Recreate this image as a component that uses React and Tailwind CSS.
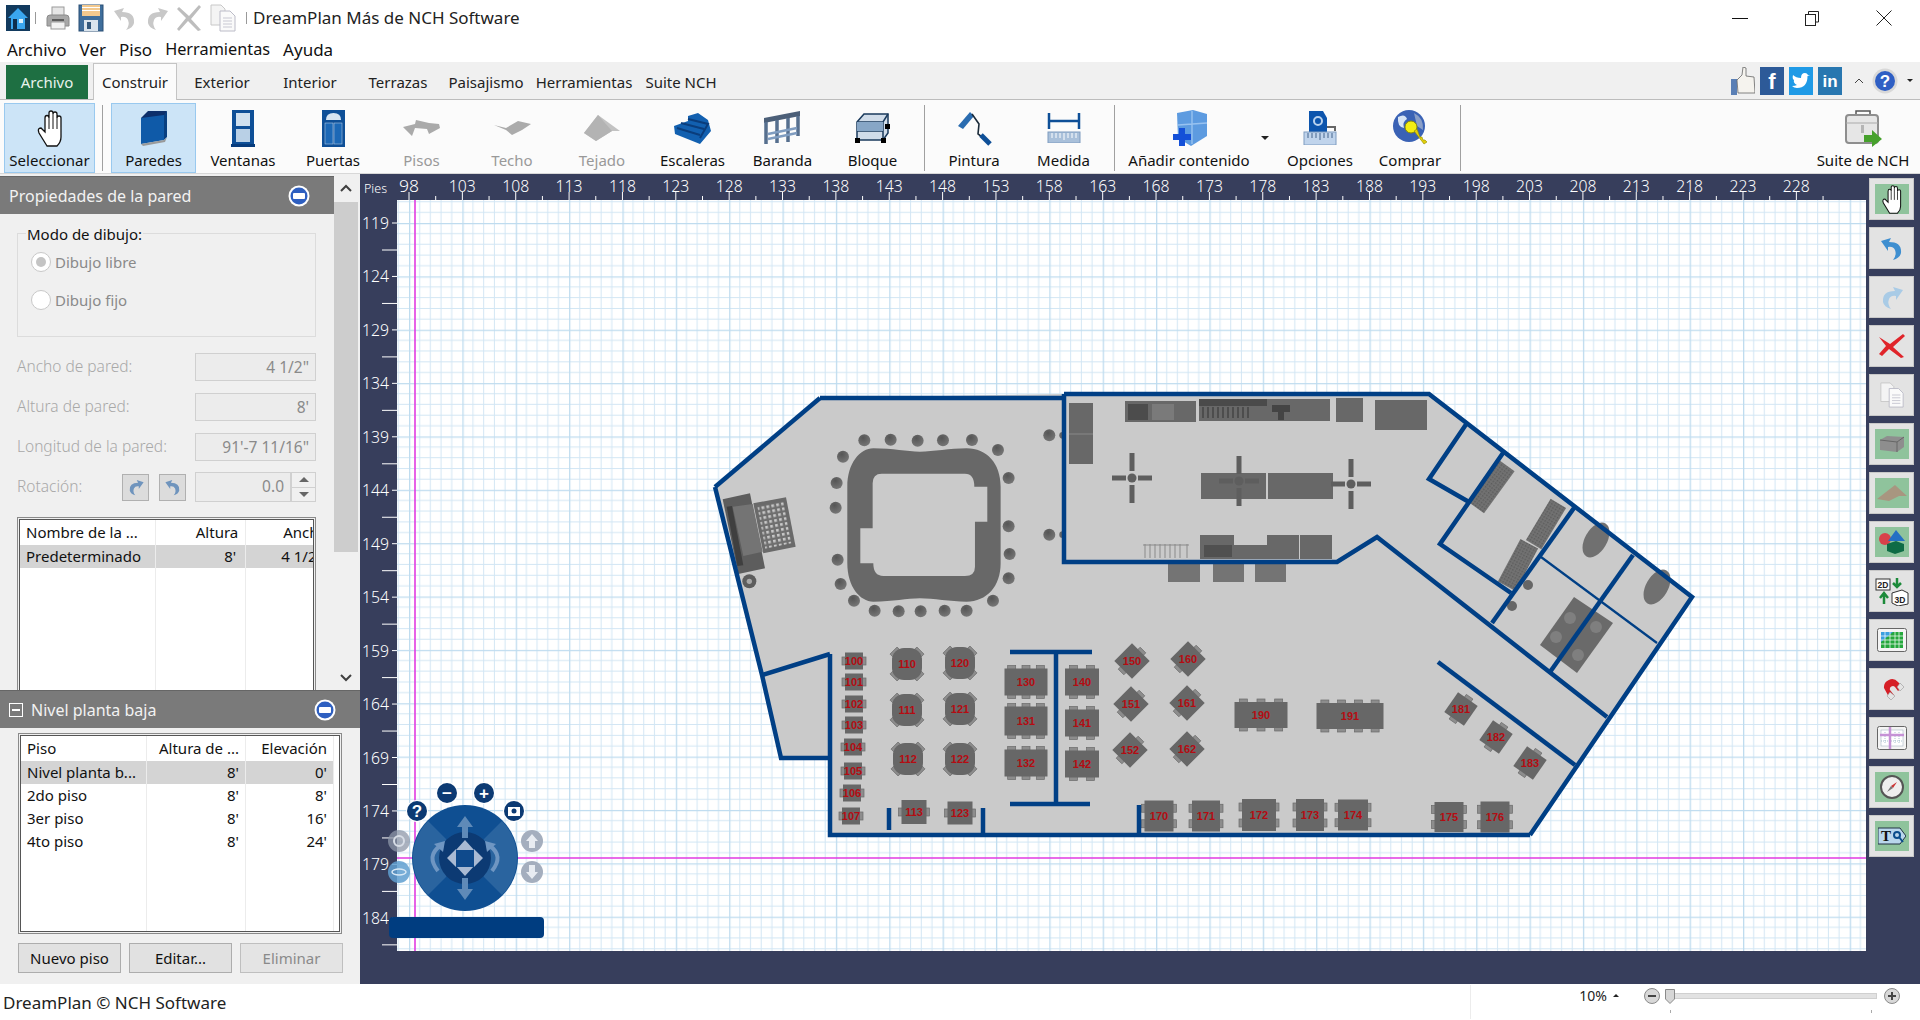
const FONT = "font-['Noto_Sans','Open_Sans',sans-serif]"

const TABS = [
  { label: 'Exterior', w: 'w-[90px]' },
  { label: 'Interior', w: 'w-[86px]' },
  { label: 'Terrazas', w: 'w-[90px]' },
  { label: 'Paisajismo', w: 'w-[86px]' },
  { label: 'Herramientas', w: 'w-[110px]' },
  { label: 'Suite NCH', w: 'w-[84px]' },
]

// ---------- small drawn icons ----------

function HandIcon({ width = 28, height = 37 }) {
  return (
    <svg width={width} height={height} viewBox="0 0 26 37">
      <path
        d="M10 36 L2 23 Q0 18 4 18 L8 22 V8 Q8 5.5 10 5.5 Q12 5.5 12 8 V3 Q12 1 14 1 Q16 1 16 3 V4 Q16 2 18 2 Q20 2 20 4 V8 Q20 6 22 6 Q24 6 24 8 V27 Q24 32 20 36 Z"
        fill="#fff"
        stroke="#111"
        strokeWidth="1.3"
      />
      <path d="M12 8 V19 M16 4 V19 M20 8 V19" fill="none" stroke="#111" strokeWidth="1" />
    </svg>
  )
}

function AppIcon() {
  return (
    <svg width="24" height="26" viewBox="0 0 24 26">
      <rect width="24" height="26" fill="#123a5e" />
      <path d="M12 3 L22 13 L19 13 L19 24 L5 24 L5 13 L2 13 Z" fill="#3aa6f0" />
      <rect x="7" y="14" width="4" height="10" fill="#0d2d4d" />
      <rect x="13" y="14" width="4" height="4" fill="#d7efff" />
    </svg>
  )
}

function PrinterIcon() {
  return (
    <svg width="26" height="26" viewBox="0 0 26 26">
      <rect x="7" y="2" width="12" height="10" fill="#e6e6e6" stroke="#9a9a9a" />
      <path d="M2 13 Q2 10 5 10 L21 10 Q24 10 24 13 L24 21 L2 21 Z" fill="#a8a8a8" stroke="#8a8a8a" />
      <rect x="6" y="17" width="14" height="7" fill="#f2f2f2" stroke="#999" />
      <rect x="7" y="14" width="12" height="2" fill="#5c5c5c" />
    </svg>
  )
}

function SaveIcon() {
  return (
    <svg width="26" height="28" viewBox="0 0 26 28">
      <rect x="1" y="1" width="24" height="26" fill="#3f6e9c" stroke="#2a4f75" />
      <rect x="4" y="1" width="18" height="11" fill="#f3c98e" />
      <rect x="4" y="3" width="18" height="1" fill="#fff" />
      <rect x="4" y="6" width="18" height="1" fill="#fff" />
      <rect x="6" y="16" width="14" height="11" fill="#dbe5ee" />
      <rect x="9" y="18" width="4" height="7" fill="#34597d" />
    </svg>
  )
}

function UndoIcon({ flip, color = '#c8c8c8', size = 26 }) {
  return (
    <svg width={size} height={size} viewBox="0 0 26 26" className={flip ? '-scale-x-100' : ''}>
      <path d="M2 6 L12 3 L10 7 Q23 7 22 18 Q21 23 14 25 Q18 20 16 15 Q14 11 9 12 L9 16 Z" fill={color} />
    </svg>
  )
}

function CrossIcon() {
  return (
    <svg width="26" height="28" viewBox="0 0 26 28">
      <path d="M3 3 L13 12 L23 1 L25 3 L15 15 L25 26 L22 27 L12 17 L3 27 L1 25 L10 14 L1 5 Z" fill="#bdbdbd" />
    </svg>
  )
}

function CopyIcon({ size = 28 }) {
  return (
    <svg width={size} height={size} viewBox="0 0 28 28">
      <path d="M2 1 L12 1 L16 5 L16 21 L2 21 Z" fill="#f4f4f4" stroke="#c8c8c8" />
      <path d="M11 7 L21 7 L26 12 L26 27 L11 27 Z" fill="#fafafa" stroke="#bcbcc8" />
      <path d="M14 14 H23 M14 17 H23 M14 20 H23 M14 23 H23" stroke="#c8c8d2" />
    </svg>
  )
}

function WallIcon() {
  return (
    <svg width="27" height="36" viewBox="0 0 27 36">
      <path d="M1 8 L8 1 L27 1 L24 8 Z" fill="#0c2f6b" />
      <path d="M1 8 L24 5 L24 30 L1 34 Z" fill="#0f5aa8" />
      <path d="M24 5 L27 1 L27 27 L24 30 Z" fill="#083f80" />
      <path d="M1 34 L24 30 L27 27 L25 32 L3 36 Z" fill="#9a9a9a" />
    </svg>
  )
}

function WindowIcon() {
  return (
    <svg width="24" height="37" viewBox="0 0 24 37">
      <rect x="1" y="0" width="22" height="35" fill="#0e4f97" />
      <rect x="5" y="3" width="14" height="13" fill="#cfe0ef" />
      <rect x="5" y="19" width="14" height="13" fill="#b9d0e6" />
      <rect x="0" y="34" width="24" height="3" fill="#063b7c" />
    </svg>
  )
}

function DoorIcon() {
  return (
    <svg width="23" height="37" viewBox="0 0 23 37">
      <rect width="23" height="37" fill="#0e4f97" />
      <path d="M4 10 Q4 3 11.5 3 Q19 3 19 10 Z" fill="#d6e4f1" />
      <rect x="3" y="13" width="8" height="21" fill="#1c68b6" stroke="#c5d8ea" strokeWidth="0.5" />
      <rect x="12" y="13" width="8" height="21" fill="#1c68b6" stroke="#c5d8ea" strokeWidth="0.5" />
    </svg>
  )
}

function FloorIcon() {
  return (
    <svg width="37" height="16" viewBox="0 0 37 16">
      <path d="M0 7 L12 4 L13 0 L26 3 L36 4 L37 8 L26 14 L24 9 L12 8 L9 16 Z" fill="#aaaaaa" />
    </svg>
  )
}

function CeilingIcon() {
  return (
    <svg width="37" height="14" viewBox="0 0 37 14">
      <path d="M0 4 L12 7 L24 0 L37 3 L28 9 L18 14 L12 9 Z" fill="#ababab" />
    </svg>
  )
}

function RoofIcon() {
  return (
    <svg width="36" height="26" viewBox="0 0 36 26">
      <path d="M14 0 L36 16 L28 16 L12 26 L0 18 Z" fill="#c2c2c2" />
      <path d="M14 0 L28 16 L12 26 L0 18 Z" fill="#b3b3b3" />
    </svg>
  )
}

function StairsIcon() {
  return (
    <svg width="37" height="31" viewBox="0 0 37 31">
      <path d="M0 13 L14 8 L14 3 L24 0 L34 7 L37 18 L26 31 L1 21 Z" fill="#1260b0" />
      <path d="M3 15 L26 22 M7 10 L30 16 M14 6 L34 11 L26 25" stroke="#0a3d7c" strokeWidth="2" fill="none" />
    </svg>
  )
}

function RailingIcon() {
  return (
    <svg width="37" height="36" viewBox="0 0 37 36">
      <path d="M0 8 L36 1 L36 6 L0 13 Z" fill="#4c5f78" />
      <path d="M2 12 V34 M13 10 V33 M24 8 V32 M34 6 V26" stroke="#566f8e" strokeWidth="3.5" />
      <path d="M4 24 L33 18 M4 29 L33 23" stroke="#7f9cc0" strokeWidth="2.5" />
    </svg>
  )
}

function BlockIcon() {
  return (
    <svg width="36" height="30" viewBox="0 0 36 30">
      <path d="M2 9 L9 1 L33 1 L33 20 L28 27 L2 27 Z" fill="#d0dce9" stroke="#1a3a5c" strokeWidth="1.5" />
      <path d="M2 9 L28 9 L33 1 M28 9 L28 27 M2 18 L28 18" fill="none" stroke="#1a3a5c" strokeWidth="1.5" />
      <path d="M2 9 H28 V18 H2 Z" fill="#87a6c6" />
      <rect x="0" y="25" width="5" height="5" fill="#000" />
      <rect x="26" y="25" width="5" height="5" fill="#000" />
      <rect x="30" y="11" width="5" height="5" fill="#000" />
    </svg>
  )
}

function PaintIcon() {
  return (
    <svg width="36" height="36" viewBox="0 0 36 36">
      <path d="M2 16 L14 2 L18 6 L7 19 Z" fill="#2a6cb0" />
      <path d="M16 4 L23 14 L22 24 L31 31" stroke="#1b2b3a" strokeWidth="1.6" fill="none" />
      <path d="M25 25 L34 34" stroke="#0e4f97" strokeWidth="5" />
    </svg>
  )
}

function MeasureIcon() {
  return (
    <svg width="34" height="30" viewBox="0 0 34 30">
      <path d="M2 0 V16 M32 0 V16 M2 8 H32" stroke="#0e4f97" strokeWidth="2.5" />
      <rect x="1" y="19" width="32" height="11" fill="#a9c0da" stroke="#7f9cc0" />
      <path d="M5 20 V25 M9 20 V25 M13 20 V25 M17 20 V27 M21 20 V25 M25 20 V25 M29 20 V25" stroke="#fff" />
    </svg>
  )
}

function AddContentIcon() {
  return (
    <svg width="36" height="36" viewBox="0 0 36 36">
      <path d="M6 3 L22 0 L36 4 L36 26 L20 36 L7 28 Z" fill="#5d9be0" />
      <path d="M21 1 V34 M7 15 L36 13" stroke="#98c2f0" strokeWidth="1.4" />
      <path d="M8 18 H14 V24 H20 V30 H14 V36 H8 V30 H2 V24 H8 Z" fill="#1450d8" />
    </svg>
  )
}

function OptionsIcon() {
  return (
    <svg width="34" height="34" viewBox="0 0 34 34">
      <path d="M6 0 H20 L24 7 V22 H6 Z" fill="#0d55ad" />
      <circle cx="15" cy="10" r="4" fill="none" stroke="#b9d2ee" strokeWidth="2" />
      <path d="M24 16 H32 V20" stroke="#666" strokeWidth="2" fill="none" />
      <rect x="1" y="21" width="32" height="13" fill="#c0d4ec" stroke="#7f9cc0" />
      <path d="M5 22 V27 M9 22 V27 M13 22 V27 M17 22 V29 M21 22 V27 M25 22 V27 M29 22 V27" stroke="#44648c" />
    </svg>
  )
}

function BuyIcon() {
  return (
    <svg width="36" height="36" viewBox="0 0 36 36">
      <circle cx="17" cy="16" r="16" fill="#3a62b5" />
      <path d="M6 7 Q13 3 15 9 Q10 12 12 18 Q5 17 6 7 Z" fill="#d6e4f5" />
      <path d="M22 3 Q32 8 31 20 L25 16 Z" fill="#8a9fc7" />
      <circle cx="19" cy="17" r="6" fill="#f3ee12" stroke="#8d8a00" />
      <path d="M22 21 L32 34 L35 32 L33 30 L31 30 L30 27 L28 27 L25 19 Z" fill="#e3cf0a" stroke="#8d8a00" strokeWidth="0.6" />
    </svg>
  )
}

function SuiteIcon() {
  return (
    <svg width="38" height="37" viewBox="0 0 38 37">
      <path d="M12 5 V1 H26 V5" fill="none" stroke="#555" strokeWidth="1.5" />
      <rect x="2" y="5" width="32" height="28" rx="3" fill="#e6e6e6" stroke="#8e8e8e" strokeWidth="2" />
      <path d="M2 13 H34" stroke="#aaa" />
      <rect x="17" y="15" width="3" height="8" fill="#b5b5b5" />
      <path d="M20 25 H28 V20 L38 29 L28 37 V32 H20 Z" fill="#46a12c" />
    </svg>
  )
}

function MinusBadge() {
  return (
    <svg width="22" height="22" viewBox="0 0 22 22">
      <circle cx="11" cy="11" r="10.5" fill="#fff" />
      <circle cx="11" cy="11" r="8.5" fill="#2e5fc0" />
      <rect x="5" y="8" width="12" height="6" rx="1" fill="#fff" />
    </svg>
  )
}

function Chevron({ down }) {
  return (
    <svg width="12" height="8" viewBox="0 0 12 8" className={down ? 'rotate-180' : ''}>
      <path d="M1 7 L6 2 L11 7" fill="none" stroke="#404040" strokeWidth="2" />
    </svg>
  )
}

// ---------- ribbon ----------

function ToolButton({ label, width, active, disabled, children }) {
  return (
    <div
      className={`${width} h-[70px] flex-shrink-0 flex flex-col items-center border ${
        active ? 'bg-[#cce4f7] border-[#99c9ef]' : 'border-transparent'
      }`}
    >
      <div className="h-[46px] flex items-center justify-center pt-[2px]">{children}</div>
      <span className={`text-[15px] leading-[20px] whitespace-nowrap ${disabled ? 'text-[#999]' : 'text-[#111]'}`}>
        {label}
      </span>
    </div>
  )
}

function Separator({ ml = 'ml-0', mr = 'mr-0' }) {
  return <div className={`w-px h-[66px] bg-[#a0a0a0] flex-shrink-0 mt-[2px] ${ml} ${mr}`} />
}

function Ribbon() {
  return (
    <div className="h-[74px] bg-[#fbfbfb] flex items-start pt-[3px] pl-[4px] border-b border-[#d8d8d8]">
      <ToolButton label="Seleccionar" width="w-[91px]" active>
        <HandIcon />
      </ToolButton>
      <Separator ml="ml-[7px]" mr="mr-[8px]" />
      <ToolButton label="Paredes" width="w-[85px]" active>
        <WallIcon />
      </ToolButton>
      <ToolButton label="Ventanas" width="w-[94px]">
        <WindowIcon />
      </ToolButton>
      <ToolButton label="Puertas" width="w-[86px]">
        <DoorIcon />
      </ToolButton>
      <ToolButton label="Pisos" width="w-[91px]" disabled>
        <FloorIcon />
      </ToolButton>
      <ToolButton label="Techo" width="w-[90px]" disabled>
        <CeilingIcon />
      </ToolButton>
      <ToolButton label="Tejado" width="w-[90px]" disabled>
        <RoofIcon />
      </ToolButton>
      <ToolButton label="Escaleras" width="w-[91px]">
        <StairsIcon />
      </ToolButton>
      <ToolButton label="Baranda" width="w-[89px]">
        <RailingIcon />
      </ToolButton>
      <ToolButton label="Bloque" width="w-[91px]">
        <BlockIcon />
      </ToolButton>
      <Separator ml="ml-[6px]" mr="mr-[5px]" />
      <ToolButton label="Pintura" width="w-[88px]">
        <PaintIcon />
      </ToolButton>
      <ToolButton label="Medida" width="w-[91px]">
        <MeasureIcon />
      </ToolButton>
      <Separator ml="ml-[5px]" mr="mr-[5px]" />
      <ToolButton label="Añadir contenido" width="w-[138px]">
        <AddContentIcon />
      </ToolButton>
      <div className="w-[17px] flex-shrink-0 pt-[33px] pl-[3px]">
        <div className="w-0 h-0 border-x-[4px] border-x-transparent border-t-[4px] border-t-[#222]" />
      </div>
      <ToolButton label="Opciones" width="w-[90px]">
        <OptionsIcon />
      </ToolButton>
      <ToolButton label="Comprar" width="w-[90px]">
        <BuyIcon />
      </ToolButton>
      <Separator ml="ml-[5px]" />
      <div className="ml-auto mr-[4px]">
        <ToolButton label="Suite de NCH" width="w-[106px]">
          <SuiteIcon />
        </ToolButton>
      </div>
    </div>
  )
}

function SocialIcons() {
  return (
    <div className="ml-auto flex items-center h-full pr-[7px]">
      <svg width="24" height="28" viewBox="0 0 24 28">
        <rect x="0" y="12" width="6" height="16" fill="#5a7fb5" />
        <path d="M6 13 L11 8 L12 0 L15 1 L15 9 L23 10 L24 26 L7 26 Z" fill="#f5f3ee" stroke="#666" strokeWidth="0.8" />
      </svg>
      <div className="ml-[5px] w-[24px] h-[28px] bg-[#2d5a98] text-white text-[22px] font-bold leading-[30px] text-center font-['Liberation_Sans',sans-serif]">
        f
      </div>
      <div className="ml-[5px] w-[24px] h-[28px] bg-[#1f9ae6] flex items-center justify-center">
        <svg width="18" height="15" viewBox="0 0 18 15">
          <path d="M18 2 L15.5 3 Q15.5 15 5 15 Q2 15 0 13 Q3 13 5 12 Q1 10 2 7 Q0 6 1 2 Q4 5 9 5 Q9 0 13 0 Q15 0 16 2 Z" fill="#fff" />
        </svg>
      </div>
      <div className="ml-[5px] w-[24px] h-[28px] bg-[#2877b0] text-white text-[17px] font-bold leading-[30px] text-center font-['Liberation_Sans',sans-serif]">
        in
      </div>
      <svg className="ml-[12px]" width="10" height="6" viewBox="0 0 10 6">
        <path d="M1 5 L5 1 L9 5" fill="none" stroke="#444" />
      </svg>
      <svg className="ml-[8px]" width="26" height="26" viewBox="0 0 26 26">
        <circle cx="13" cy="13" r="12.5" fill="#d8d8d8" />
        <circle cx="13" cy="13" r="10" fill="#2f5fc4" />
        <text x="13" y="19" textAnchor="middle" fontSize="17" fontWeight="700" fill="#fff" fontFamily="Liberation Sans">?</text>
      </svg>
      <div className="ml-[9px] w-0 h-0 border-x-[3px] border-x-transparent border-t-[3px] border-t-[#222]" />
    </div>
  )
}

function TopBar() {
  return (
    <>
      <div className="h-[36px] flex items-center bg-white pl-[6px]">
        <AppIcon />
        <div className="w-px h-[12px] bg-[#999] ml-[5px] mr-[9px]" />
        <PrinterIcon />
        <div className="ml-[7px]"><SaveIcon /></div>
        <div className="ml-[8px]"><UndoIcon /></div>
        <div className="ml-[6px]"><UndoIcon flip /></div>
        <div className="ml-[6px]"><CrossIcon /></div>
        <div className="ml-[7px]"><CopyIcon /></div>
        <div className="w-px h-[12px] bg-[#999] ml-[9px] mr-[6px]" />
        <span className="text-[17px] text-[#222]">DreamPlan Más de NCH Software</span>
        <div className="ml-auto flex items-center">
          <div className="w-[16px] h-px bg-[#111] mr-[56px]" />
          <svg className="mr-[56px]" width="16" height="16" viewBox="0 0 16 16">
            <rect x="1.5" y="4.5" width="10" height="11" fill="#fff" stroke="#222" />
            <path d="M4.5 4 V1.5 H14.5 V12 H12" fill="none" stroke="#222" />
          </svg>
          <svg className="mr-[28px]" width="16" height="16" viewBox="0 0 16 16">
            <path d="M0.5 0.5 L15.5 15.5 M15.5 0.5 L0.5 15.5" stroke="#222" />
          </svg>
        </div>
      </div>
      <div className="h-[26px] flex items-center bg-white pl-[7px] text-[17px] text-[#111] gap-[13px] pt-[1px]">
        <span>Archivo</span>
        <span>Ver</span>
        <span>Piso</span>
        <span className="text-[16.3px]">Herramientas</span>
        <span>Ayuda</span>
      </div>
      <div className="h-[38px] bg-[#f0f0f0] flex items-end border-b border-[#bcbcbc] pl-[6px] text-[15px] text-[#222]">
        <div className="w-[82px] h-[34px] bg-[#1e6f42] text-[#e8f3ec] flex items-center justify-center">Archivo</div>
        <div className="ml-[5px] w-[84px] h-[37px] bg-[#fbfbfb] border border-b-0 border-[#c4c4c4] -mb-px flex items-center justify-center">
          Construir
        </div>
        {TABS.map((tab) => (
          <div key={tab.label} className={`${tab.w} h-[34px] flex items-center justify-center whitespace-nowrap`}>
            {tab.label}
          </div>
        ))}
        <SocialIcons />
      </div>
      <Ribbon />
    </>
  )
}

// ---------- left panels ----------

function PanelHeader({ title, collapse, className = '' }) {
  return (
    <div className={`h-[38px] bg-[#7a7a7a] flex items-center text-[16px] text-[#f2f2f2] flex-shrink-0 border-t border-[#666] ${className}`}>
      {collapse && (
        <div className="ml-[9px] mr-[8px] w-[14px] h-[14px] border border-white flex items-center justify-center">
          <div className="w-[8px] h-[2px] bg-white" />
        </div>
      )}
      <span className={collapse ? '' : 'ml-[9px]'}>{title}</span>
      <div className="ml-auto mr-[24px] flex"><MinusBadge /></div>
    </div>
  )
}

function Radio({ label, checked }) {
  return (
    <div className="flex items-center h-[38px] pl-[13px]">
      <div className="w-[20px] h-[20px] rounded-full bg-white border border-[#c8c8c8] flex items-center justify-center">
        {checked && <div className="w-[10px] h-[10px] rounded-full bg-[#c4c4c4]" />}
      </div>
      <span className="ml-[4px] text-[15px] text-[#8a8a8a]">{label}</span>
    </div>
  )
}

function Field({ label, value }) {
  return (
    <div className="flex items-center h-[28px] mb-[12px]">
      <span className="w-[178px] text-[15.5px] font-light text-[#a8a8a8] whitespace-nowrap">{label}</span>
      <div className="w-[121px] h-[28px] border border-[#d0d0d0] bg-[#ececec] text-right pr-[6px] text-[15.5px] leading-[26px] text-[#8a8a8a] whitespace-nowrap">
        {value}
      </div>
    </div>
  )
}

function RotateButton({ flip }) {
  return (
    <div className="w-[27px] h-[27px] border border-[#b0b0b0] bg-[#dcdcdc] flex items-center justify-center">
      <UndoIcon flip={flip} color="#6f94bd" size={18} />
    </div>
  )
}

function WallProperties() {
  return (
    <div className="w-[334px] h-[516px] overflow-hidden flex flex-col bg-[#f0f0f0] flex-shrink-0">
      <PanelHeader title="Propiedades de la pared" className="mt-[2px]" />
      <div className="relative mt-[19px] ml-[17px] w-[299px] h-[104px] flex-shrink-0 border border-[#dcdcdc] pt-[9px]">
        <span className="absolute -top-[11px] left-[8px] bg-[#f0f0f0] px-px text-[15px] text-[#111]">Modo de dibujo:</span>
        <Radio label="Dibujo libre" checked />
        <Radio label="Dibujo fijo" />
      </div>
      <div className="ml-[17px] mt-[16px] flex-shrink-0">
        <Field label="Ancho de pared:" value={'4 1/2"'} />
        <Field label="Altura de pared:" value="8'" />
        <Field label="Longitud de la pared:" value={'91\'-7 11/16"'} />
        <div className="flex items-center h-[30px] -mt-[1px]">
          <span className="w-[105px] text-[15.5px] font-light text-[#a8a8a8]">Rotación:</span>
          <RotateButton flip />
          <div className="ml-[10px]"><RotateButton /></div>
          <div className="ml-[9px] w-[96px] h-[30px] border border-[#d0d0d0] bg-[#ececec] text-right pr-[6px] text-[15.5px] leading-[26px] text-[#8a8a8a]">
            0.0
          </div>
          <div className="w-[25px] h-[30px] border border-[#d0d0d0] flex flex-col">
            <div className="flex-1 flex items-center justify-center border-b border-[#d0d0d0]">
              <div className="w-0 h-0 border-x-[5px] border-x-transparent border-b-[5px] border-b-[#666]" />
            </div>
            <div className="flex-1 flex items-center justify-center">
              <div className="w-0 h-0 border-x-[5px] border-x-transparent border-t-[5px] border-t-[#666]" />
            </div>
          </div>
        </div>
      </div>
      <div className="ml-[17px] mt-[15px] w-[299px] h-[200px] border border-[#8a8a8a] p-px flex-shrink-0">
        <div className="relative w-full h-full border border-[#555] bg-white overflow-hidden text-[15px] text-[#111]">
          <div className="flex h-[25px] items-center">
            <div className="w-[135px] pl-[6px] whitespace-nowrap">Nombre de la ...</div>
            <div className="w-[90px] text-right pr-[5px]">Altura</div>
            <div className="w-[70px] pl-[40px] whitespace-nowrap overflow-hidden">Ancho</div>
          </div>
          <div className="flex h-[23px] items-center bg-[#d4d4d4]">
            <div className="w-[135px] pl-[6px]">Predeterminado</div>
            <div className="w-[90px] text-right pr-[7px]">8'</div>
            <div className="w-[70px] pl-[38px] whitespace-nowrap overflow-hidden">4 1/2"</div>
          </div>
          <div className="absolute top-0 bottom-0 left-[135px] w-px bg-[#ececec]" />
          <div className="absolute top-0 bottom-0 left-[225px] w-px bg-[#ececec]" />
        </div>
      </div>
    </div>
  )
}

function PanelScrollbar() {
  return (
    <div className="w-[24px] bg-[#f0f0f0] flex flex-col">
      <div className="h-[28px] flex items-center justify-center"><Chevron /></div>
      <div className="h-[350px] bg-[#cdcdcd]" />
      <div className="flex-1" />
      <div className="h-[24px] flex items-center justify-center"><Chevron down /></div>
    </div>
  )
}

const FLOORS = [
  { name: 'Nivel planta b...', height: "8'", level: "0'", selected: true },
  { name: '2do piso', height: "8'", level: "8'" },
  { name: '3er piso', height: "8'", level: "16'" },
  { name: '4to piso', height: "8'", level: "24'" },
]

function FloorPanel() {
  return (
    <div className="h-[294px] bg-[#f0f0f0] flex flex-col">
      <PanelHeader title="Nivel planta baja" collapse />
      <div className="ml-[18px] mt-[5px] w-[324px] h-[201px] flex-shrink-0 border border-[#8a8a8a] p-px">
        <div className="relative w-full h-full border border-[#555] bg-white text-[15px] text-[#111] overflow-hidden">
          <div className="flex h-[25px] items-center">
            <div className="w-[125px] pl-[6px]">Piso</div>
            <div className="w-[99px] text-right pr-[6px] whitespace-nowrap">Altura de ...</div>
            <div className="w-[88px] text-right pr-[6px]">Elevación</div>
          </div>
          {FLOORS.map((floor) => (
            <div key={floor.name} className={`flex h-[23px] items-center w-[312px] ${floor.selected ? 'bg-[#d4d4d4]' : ''}`}>
              <div className="w-[125px] pl-[6px] whitespace-nowrap">{floor.name}</div>
              <div className="w-[99px] text-right pr-[6px]">{floor.height}</div>
              <div className="w-[88px] text-right pr-[6px]">{floor.level}</div>
            </div>
          ))}
          <div className="absolute top-0 bottom-0 left-[125px] w-px bg-[#ececec]" />
          <div className="absolute top-0 bottom-0 left-[224px] w-px bg-[#ececec]" />
          <div className="absolute top-0 bottom-0 left-[312px] w-px bg-[#ececec]" />
        </div>
      </div>
      <div className="ml-[18px] mt-[9px] flex gap-[8px] text-[15px]">
        <div className="w-[103px] h-[30px] border border-[#adadad] bg-[#e1e1e1] text-[#111] flex items-center justify-center">Nuevo piso</div>
        <div className="w-[103px] h-[30px] border border-[#adadad] bg-[#e1e1e1] text-[#111] flex items-center justify-center">Editar...</div>
        <div className="w-[103px] h-[30px] border border-[#bfbfbf] bg-[#e4e4e4] text-[#8a8a8a] flex items-center justify-center">Eliminar</div>
      </div>
    </div>
  )
}

// ---------- plan drawing ----------

const range = (n) => Array.from({ length: n }, (_, i) => i)

function Rulers() {
  const step = 53.36
  return (
    <g fontFamily="Noto Sans" fontWeight="300" fill="#fff" fontSize="16.5">
      <text x="364" y="193" fontSize="12.5">Pies</text>
      {range(27).map((i) => {
        const x = 409 + i * step
        return (
          <g key={i}>
            <text x={x} y="192" textAnchor="middle" textLength={i < 1 ? 20 : 27} lengthAdjust="spacingAndGlyphs">{98 + i * 5}</text>
            <path d={`M${x} 192 V200 M${x + 26.7} 196 V200`} stroke="#fff" />
          </g>
        )
      })}
      {range(14).map((i) => {
        const y = 223 + i * 53.45
        return (
          <g key={i}>
            <text x="362" y={y + 6} textLength="27" lengthAdjust="spacingAndGlyphs">{119 + i * 5}</text>
            <path d={`M392 ${y} H397 M382 ${y + 27} H397`} stroke="#fff" />
          </g>
        )
      })}
    </g>
  )
}

function Chairs({ w, h, sides, n = 2 }) {
  const out = []
  const cw = 8
  if (sides.includes('t') || sides.includes('b')) {
    range(n).forEach((i) => {
      const cx = -w / 2 + ((i + 0.5) * w) / n
      if (sides.includes('t')) out.push(<rect key={`t${i}`} x={cx - cw / 2} y={-h / 2 - 3} width={cw} height="4" fill="#8d8d8d" stroke="#6a6a6a" strokeWidth="0.7" />)
      if (sides.includes('b')) out.push(<rect key={`b${i}`} x={cx - cw / 2} y={h / 2 - 1} width={cw} height="4" fill="#8d8d8d" stroke="#6a6a6a" strokeWidth="0.7" />)
    })
  }
  if (sides.includes('l') || sides.includes('r')) {
    range(n).forEach((i) => {
      const cy = -h / 2 + ((i + 0.5) * h) / n
      if (sides.includes('l')) out.push(<rect key={`l${i}`} x={-w / 2 - 3} y={cy - cw / 2} width="4" height={cw} fill="#8d8d8d" stroke="#6a6a6a" strokeWidth="0.7" />)
      if (sides.includes('r')) out.push(<rect key={`r${i}`} x={w / 2 - 1} y={cy - cw / 2} width="4" height={cw} fill="#8d8d8d" stroke="#6a6a6a" strokeWidth="0.7" />)
    })
  }
  return out
}

// [label, x, y, w, h, rotation, sides, chairs per side, corner radius]
const TABLES = [
  ['100', 854, 661, 18, 17, 0, 'lr', 1],
  ['101', 854, 682, 18, 17, 0, 'lr', 1],
  ['102', 854, 704, 18, 17, 0, 'lr', 1],
  ['103', 854, 725, 18, 17, 0, 'lr', 1],
  ['104', 853, 747, 18, 17, 0, 'lr', 1],
  ['105', 853, 771, 18, 17, 0, 'lr', 1],
  ['106', 852, 793, 18, 17, 0, 'lr', 1],
  ['107', 851, 816, 18, 17, 0, 'lr', 1],
  ['113', 914, 812, 25, 24, 0, 'lr', 1],
  ['123', 960, 813, 25, 23, 0, 'lr', 1],
  ['110', 907, 664, 30, 32, 0, '', 0, 12],
  ['111', 907, 710, 30, 32, 0, '', 0, 12],
  ['112', 908, 759, 30, 32, 0, '', 0, 12],
  ['120', 960, 663, 30, 32, 0, '', 0, 12],
  ['121', 960, 709, 30, 32, 0, '', 0, 12],
  ['122', 960, 759, 30, 32, 0, '', 0, 12],
  ['130', 1026, 682, 43, 27, 0, 'tb', 3],
  ['131', 1026, 721, 43, 29, 0, 'tb', 3],
  ['132', 1026, 763, 43, 27, 0, 'tb', 3],
  ['140', 1082, 682, 34, 27, 0, 'tb', 2],
  ['141', 1082, 723, 34, 27, 0, 'tb', 2],
  ['142', 1082, 764, 34, 27, 0, 'tb', 2],
  ['150', 1132, 661, 25, 25, 45, 'tb', 1],
  ['151', 1131, 704, 25, 25, 45, 'tb', 1],
  ['152', 1130, 750, 25, 25, 45, 'tb', 1],
  ['160', 1188, 659, 25, 25, 45, 'tb', 1],
  ['161', 1187, 703, 25, 25, 45, 'tb', 1],
  ['162', 1187, 749, 25, 25, 45, 'tb', 1],
  ['190', 1261, 715, 53, 26, 0, 'tb', 3],
  ['191', 1350, 716, 67, 26, 0, 'tb', 4],
  ['170', 1159, 816, 29, 31, 0, 'lr', 2],
  ['171', 1206, 816, 28, 31, 0, 'lr', 2],
  ['172', 1259, 815, 34, 32, 0, 'lr', 2],
  ['173', 1310, 815, 28, 32, 0, 'lr', 2],
  ['174', 1353, 815, 30, 31, 0, 'lr', 2],
  ['175', 1449, 817, 29, 30, 0, 'lr', 2],
  ['176', 1495, 817, 29, 31, 0, 'lr', 2],
  ['181', 1461, 709, 24, 24, 35, 'tb', 1],
  ['182', 1496, 737, 24, 24, 35, 'tb', 1],
  ['183', 1530, 763, 24, 24, 35, 'tb', 1],
]

function RoundChairs() {
  return [45, 135, 225, 315].map((a) => (
    <rect key={a} x="-5" y="-19" width="10" height="4" transform={`rotate(${a})`} fill="#8d8d8d" stroke="#6a6a6a" strokeWidth="0.7" />
  ))
}

function Tables() {
  return TABLES.map(([label, x, y, w, h, rot, sides, n, radius]) => (
    <g key={label}>
      <g transform={`translate(${x} ${y}) rotate(${rot})`}>
        {radius ? <RoundChairs /> : <Chairs w={w} h={h} sides={sides} n={n} />}
        <rect x={-w / 2} y={-h / 2} width={w} height={h} rx={radius || 0} fill="#676767" />
      </g>
      <text x={x} y={y + 4} textAnchor="middle" fontSize="11" fontWeight="700" fill="#b40c12" fontFamily="Liberation Sans">{label}</text>
    </g>
  ))
}

function Fan({ x, y }) {
  return (
    <g fill="#5e5e5e">
      <rect x={x - 2.5} y={y - 25} width="5" height="18" />
      <rect x={x - 2.5} y={y + 7} width="5" height="18" />
      <rect x={x - 20} y={y - 2.5} width="14" height="5" />
      <rect x={x + 6} y={y - 2.5} width="14" height="5" />
      <circle cx={x} cy={y} r="4.5" />
    </g>
  )
}

const RING_CHAIRS = [
  [493, 181], [572, 179], [653, 182], [729, 181], [816, 180], [894, 210], [429, 230], [410, 309], [407, 383],
  [413, 539], [422, 612], [462, 662], [524, 692], [596, 694], [662, 694], [734, 692], [800, 692], [879, 662],
  [926, 595], [929, 522], [926, 439], [926, 294], [1048, 166], [1048, 464],
]

function Conference() {
  return (
    <g transform="translate(700 380) scale(0.3333)">
      <path
        fillRule="evenodd"
        fill="#686868"
        d="M520 205 C580 205 620 215 660 215 C700 215 750 205 800 205 C860 205 902 250 902 320 L902 550 C902 620 860 665 800 665 C750 665 700 655 660 655 C620 655 580 665 520 665 C480 665 442 620 442 550 L442 320 C442 250 480 205 520 205 Z M545 281 L795 281 Q823 281 823 320 L862 320 L862 425 L825 425 L825 560 Q825 588 795 588 L550 588 Q520 588 520 550 L481 550 L481 445 L518 445 L518 310 Q518 281 545 281 Z"
      />
      {RING_CHAIRS.map(([cx, cy]) => (
        <circle key={`${cx}-${cy}`} cx={cx} cy={cy} r="18" fill="url(#chairShade)" />
      ))}
      <circle cx="1088" cy="166" r="10" fill="#666" />
      <circle cx="1088" cy="464" r="10" fill="#666" />
      <path d="M68 358 L150 340 L195 565 L115 582 Z" fill="#5d5d5d" />
      <path d="M98 380 L158 372 L188 515 L130 528 Z" fill="#747474" />
      <path d="M80 380 L96 378 L130 556 L112 558 Z" fill="#3f3f3f" />
      <path d="M160 370 L258 352 L287 500 L190 520 Z" fill="#6a6a6a" />
      <path d="M172 378 L250 364 L274 490 L196 506 Z" fill="url(#mat)" />
      <circle cx="148" cy="604" r="21" fill="#5d5d5d" />
      <circle cx="148" cy="604" r="8" fill="#c8c8c8" opacity="0.7" />
    </g>
  )
}

function Kitchen() {
  return (
    <g fill="#686868">
      <rect x="1069" y="403" width="24" height="61" />
      <path d="M1069 434 H1093" stroke="#a0a0a0" strokeWidth="0.6" />
      <rect x="1125" y="401" width="71" height="21" />
      <path d="M1128 404 H1148 V420 H1128 Z" fill="#4c4c4c" />
      <path d="M1152 404 H1174 V420 H1152 Z" fill="#7a7a7a" />
      <rect x="1199" y="399" width="131" height="22" />
      <rect x="1199" y="399" width="68" height="7" fill="#4a4a4a" />
      <path d="M1203 407 V418 M1208 407 V418 M1213 407 V418 M1218 407 V418 M1223 407 V418 M1228 407 V418 M1233 407 V418 M1238 407 V418 M1243 407 V418 M1248 407 V418" stroke="#444" strokeWidth="1.5" />
      <path d="M1272 405 H1290 V412 H1284 V420 H1278 V412 H1272 Z" fill="#444" />
      <rect x="1336" y="398" width="27" height="24" />
      <rect x="1375" y="400" width="52" height="30" />
      <rect x="1201" y="473" width="65" height="26" />
      <rect x="1268" y="473" width="65" height="26" />
      <rect x="1200" y="535" width="34" height="24" />
      <rect x="1204" y="545" width="28" height="12" fill="#505050" />
      <rect x="1234" y="545" width="33" height="14" />
      <rect x="1267" y="535" width="32" height="24" />
      <rect x="1300" y="535" width="32" height="24" />
      <rect x="1168" y="564" width="32" height="18" fill="#747474" />
      <rect x="1213" y="564" width="31" height="18" fill="#747474" />
      <rect x="1255" y="564" width="31" height="18" fill="#747474" />
      <path d="M1145 544 V558 M1150 544 V558 M1155 544 V558 M1160 544 V558 M1165 544 V558 M1170 544 V558 M1175 544 V558 M1180 544 V558 M1187 544 V558 M1143 545 H1189" stroke="#8a8a8a" fill="none" />
      <Fan x={1132} y={478} />
      <Fan x={1239} y={481} />
      <Fan x={1351} y={484} />
    </g>
  )
}

function Cubicles() {
  return (
    <g>
      <rect x="-9" y="-26" width="18" height="52" transform="translate(1492 487) rotate(36)" fill="url(#hatch)" />
      <rect x="-9" y="-24" width="18" height="48" transform="translate(1546 524) rotate(31)" fill="url(#hatch)" />
      <rect x="-10" y="-24" width="20" height="48" transform="translate(1518 565) rotate(28)" fill="url(#hatch)" />
      <ellipse cx="1596" cy="540" rx="11" ry="19" transform="rotate(30 1596 540)" fill="#707070" />
      <ellipse cx="1657" cy="587" rx="11" ry="19" transform="rotate(30 1657 587)" fill="#707070" />
      <path d="M1574 597 L1613 623 L1577 673 L1540 645 Z" fill="#6a6a6a" />
      <circle cx="1570" cy="618" r="6" fill="#7f7f7f" />
      <circle cx="1556" cy="637" r="6" fill="#7f7f7f" />
      <circle cx="1596" cy="627" r="6" fill="#7f7f7f" />
      <circle cx="1578" cy="655" r="6" fill="#7f7f7f" />
      <circle cx="1528" cy="585" r="5" fill="#666" />
      <circle cx="1512" cy="606" r="5" fill="#666" />
    </g>
  )
}

function Walls() {
  const walls = [
    'M820 398 H1064',
    'M715 487 L820 398',
    'M715 487 L762 675 L781 758 H830',
    'M762 675 L830 654',
    'M830 654 V835 H1530',
    'M1064 394 H1429 L1692 597 L1530 835',
    'M1064 394 V562 H1337 L1377 537 L1607 717',
    'M1467 423 L1429 479 L1469 502',
    'M1503 453 L1440 544 L1511 593',
    'M1574 508 L1492 623',
    'M1633 555 L1550 672',
    'M1010 652 H1092 M1056 652 V804 M1010 804 H1090',
    'M889 808 V830 M983 808 V835 M1139 805 V835',
    'M1438 662 L1575 765',
  ]
  return (
    <g fill="none" stroke="#003f85" strokeWidth="4.5" strokeLinejoin="miter">
      {walls.map((d) => <path key={d} d={d} />)}
      <path d="M1541 557 L1657 643" strokeWidth="2.2" />
    </g>
  )
}

function NavWidget() {
  return (
    <g>
      <circle cx="465" cy="858" r="53" fill="#0f4f92" />
      <path d="M465 858 L428 821 A53 53 0 0 0 428 895 Z" fill="#2a649f" />
      <path d="M465 858 L502 821 A53 53 0 0 1 502 895 Z" fill="#2a649f" />
      <circle cx="465" cy="858" r="26" fill="#0c3a73" />
      <path d="M465 816 L473 827 H468 V838 H462 V827 H457 Z" fill="#5f8ab8" />
      <path d="M465 900 L473 889 H468 V878 H462 V889 H457 Z" fill="#5f8ab8" />
      <path d="M465 840 L474 850 H456 Z M465 876 L474 866 H456 Z M447 858 L456 849 V867 Z M483 858 L474 849 V867 Z" fill="#a9bad3" />
      <rect x="456" y="850" width="18" height="17" fill="#0f4a8c" />
      <path d="M438 871 Q426 856 440 846" fill="none" stroke="#6f96c2" strokeWidth="4" />
      <path d="M434 844 L445 841 L443 852 Z" fill="#6f96c2" />
      <path d="M492 871 Q504 856 490 846" fill="none" stroke="#6f96c2" strokeWidth="4" />
      <path d="M496 844 L485 841 L487 852 Z" fill="#6f96c2" />
      {[
        [417, 811, '?'],
        [447, 793, '−'],
        [484, 793, '+'],
      ].map(([x, y, t]) => (
        <g key={t}>
          <circle cx={x} cy={y} r="11" fill="#fff" />
          <circle cx={x} cy={y} r="10" fill="#0c3a73" />
          <text x={x} y={y + 6} textAnchor="middle" fontSize="17" fontWeight="700" fill="#fff" fontFamily="Liberation Sans">{t}</text>
        </g>
      ))}
      <circle cx="514" cy="811" r="11" fill="#fff" />
      <circle cx="514" cy="811" r="10" fill="#0c3a73" />
      <rect x="508" y="807" width="12" height="9" fill="#fff" />
      <circle cx="514" cy="811" r="2.5" fill="#0c3a73" />
      <circle cx="399" cy="841" r="11" fill="#8d97a8" opacity="0.75" />
      <circle cx="399" cy="841" r="5" fill="none" stroke="#d7dde6" strokeWidth="2" />
      <circle cx="399" cy="872" r="11" fill="#5f9fd0" opacity="0.85" />
      <ellipse cx="399" cy="872" rx="7" ry="3" fill="none" stroke="#d7e8f5" strokeWidth="1.5" />
      <circle cx="532" cy="841" r="11" fill="#a4aebe" />
      <path d="M532 834 L538 841 H535 V848 H529 V841 H526 Z" fill="#e8ecf2" />
      <circle cx="532" cy="872" r="11" fill="#a4aebe" />
      <path d="M532 879 L538 872 H535 V865 H529 V872 H526 Z" fill="#e8ecf2" />
      <rect x="389" y="917" width="155" height="21" rx="4" fill="#003d80" />
    </g>
  )
}

function PlanCanvas() {
  return (
    <svg className="flex-1 block" width="1506" height="810" viewBox="360 174 1506 810">
      <defs>
        <pattern id="grid" x="409" y="223" width="53.36" height="53.36" patternUnits="userSpaceOnUse">
          <path d="M10.67 0 V53.36 M21.34 0 V53.36 M32.02 0 V53.36 M42.69 0 V53.36 M0 10.67 H53.36 M0 21.34 H53.36 M0 32.02 H53.36 M0 42.69 H53.36" stroke="#d2e6f4" strokeWidth="1" />
          <path d="M0.5 0 V53.36 M0 0.5 H53.36" stroke="#bfdcef" strokeWidth="1.6" />
        </pattern>
        <pattern id="mat" width="15" height="15" patternUnits="userSpaceOnUse" patternTransform="rotate(-11)">
          <rect width="15" height="15" fill="#6f6f6f" />
          <rect x="3" y="3" width="8" height="8" fill="#c8c8c8" />
        </pattern>
        <pattern id="hatch" width="3" height="3" patternUnits="userSpaceOnUse">
          <rect width="3" height="3" fill="#727272" />
          <rect width="1.5" height="1.5" fill="#5c5c5c" />
        </pattern>
        <radialGradient id="chairShade" cx="0.4" cy="0.3" r="0.8">
          <stop offset="0" stopColor="#555" />
          <stop offset="1" stopColor="#7a7a7a" />
        </radialGradient>
      </defs>
      <rect x="360" y="174" width="1506" height="810" fill="#373e5c" />
      <rect x="397" y="200" width="1469" height="751" fill="#fff" />
      <rect x="397" y="200" width="1469" height="751" fill="url(#grid)" />
      <path d="M415 200 V951 M397 858 H1866" stroke="#e23be2" strokeWidth="1.6" />
      <polygon
        points="820,398 1064,394 1429,394 1692,597 1530,835 830,835 830,758 781,758 762,675 715,487"
        fill="#cacaca"
      />
      <Conference />
      <Kitchen />
      <Cubicles />
      <Tables />
      <Walls />
      <Rulers />
      <NavWidget />
    </svg>
  )
}

// ---------- right tool column ----------

function SideTile({ green, children }) {
  return (
    <div className="w-[45px] h-[42px] bg-[#e3e3e3] border border-[#c8c8c8] flex items-center justify-center flex-shrink-0">
      <div className={`w-[34px] h-[30px] flex items-center justify-center ${green ? 'bg-[#8fc39c]' : ''}`}>{children}</div>
    </div>
  )
}

function SideTools() {
  return (
    <div className="w-[54px] bg-[#373e5c] pl-[3px] pt-[4px] flex flex-col gap-[7px]">
      <SideTile green>
        <HandIcon width={22} height={29} />
      </SideTile>
      <SideTile><UndoIcon color="#3f8fd0" size={26} /></SideTile>
      <SideTile><UndoIcon flip color="#a9cbe6" size={26} /></SideTile>
      <SideTile>
        <svg width="28" height="26" viewBox="0 0 28 26">
          <path d="M1 4 L12 11 L25 1 L27 3 L15 14 L26 24 L23 25 L11 16 L4 23 L1 21 L8 13 Z" fill="#e0242a" />
        </svg>
      </SideTile>
      <SideTile><CopyIcon size={26} /></SideTile>
      <SideTile green>
        <svg width="26" height="18" viewBox="0 0 26 18">
          <path d="M1 5 L8 1 L25 2 L25 12 L18 17 L1 15 Z" fill="#8e8e8e" />
          <path d="M1 5 L18 7 L25 2 M18 7 V17" fill="none" stroke="#666" />
        </svg>
      </SideTile>
      <SideTile green>
        <svg width="30" height="16" viewBox="0 0 30 16">
          <path d="M0 14 L18 0 L30 11 L22 11 L12 16 Z" fill="#a89680" />
        </svg>
      </SideTile>
      <SideTile green>
        <svg width="28" height="24" viewBox="0 0 28 24">
          <circle cx="7" cy="9" r="6" fill="#d8414a" />
          <path d="M18 0 L27 11 H10 Z" fill="#2470c4" />
          <path d="M9 14 L18 11 L26 14 V21 L17 24 L9 21 Z" fill="#0e6b45" />
        </svg>
      </SideTile>
      <SideTile>
        <svg width="34" height="30" viewBox="0 0 34 30" fontFamily="Liberation Sans" fontSize="8.5" fontWeight="700">
          <rect x="1" y="3" width="14" height="11" fill="#fff" stroke="#333" />
          <text x="8" y="12" textAnchor="middle" fill="#222">2D</text>
          <path d="M17 17 L27 14 L33 17 V28 L23 30 L17 27 Z" fill="#fff" stroke="#333" />
          <text x="25" y="27" textAnchor="middle" fill="#222">3D</text>
          <path d="M22 2 V9 M18 7 L22 11 L26 7" fill="none" stroke="#1c8a3a" strokeWidth="2.5" />
          <path d="M9 28 V19 M5 22 L9 17 L13 22" fill="none" stroke="#1c8a3a" strokeWidth="2.5" />
        </svg>
      </SideTile>
      <SideTile>
        <svg width="30" height="24" viewBox="0 0 30 24">
          <rect x="0.5" y="0.5" width="29" height="23" rx="2" fill="#f4f4f4" stroke="#666" />
          <rect x="4" y="4" width="22" height="16" fill="#25a83c" />
          <path d="M4 4 H16 L4 14 Z" fill="#3b9fe0" />
          <path d="M8 4 V20 M13 4 V20 M18 4 V20 M22 4 V20 M4 8 H26 M4 12 H26 M4 16 H26" stroke="#fff" strokeWidth="0.7" />
        </svg>
      </SideTile>
      <SideTile>
        <svg width="26" height="22" viewBox="0 0 26 22">
          <path d="M5 10 A8 8 0 0 1 19 4 L24 9 L19 13 L16 9 A3 3 0 0 0 11 12 L15 17 L11 21 Z" fill="#d61f26" />
          <path d="M21 5 L25 9 L21 13 L18 9 Z M11 14 L16 18 L12 22 L8 18 Z" fill="#e4e4e4" stroke="#888" strokeWidth="0.5" />
        </svg>
      </SideTile>
      <SideTile>
        <svg width="30" height="24" viewBox="0 0 30 24">
          <rect x="0.5" y="0.5" width="29" height="23" rx="2" fill="#f4f4f4" stroke="#666" />
          <rect x="4" y="4" width="22" height="16" fill="#fff" stroke="#9ab" strokeWidth="0.5" />
          <path d="M8 6 V18 M18 6 V18 M22 6 V18 M4 15 H26" stroke="#8ab" strokeWidth="0.7" strokeDasharray="1 1" />
          <path d="M13 1 V23" stroke="#c692d6" strokeWidth="2.5" />
          <path d="M3 9 H27" stroke="#c692d6" strokeWidth="2.5" />
        </svg>
      </SideTile>
      <SideTile green>
        <svg width="24" height="24" viewBox="0 0 24 24">
          <circle cx="12" cy="12" r="11" fill="#eee" stroke="#555" strokeWidth="2" />
          <path d="M17 7 L13 13 L11 11 Z" fill="#c33" />
          <path d="M7 17 L11 11 L13 13 Z" fill="#777" />
        </svg>
      </SideTile>
      <SideTile green>
        <svg width="28" height="18" viewBox="0 0 28 18" fontFamily="Liberation Serif">
          <path d="M0 1 H22 L28 9 L22 17 H0 Z" fill="#b9d6ec" stroke="#234" />
          <text x="8" y="14" fontSize="15" fontWeight="700" textAnchor="middle" fill="#111">T</text>
          <circle cx="19" cy="8" r="3" fill="none" stroke="#0a4d8c" strokeWidth="2" />
          <path d="M21 10 L25 15" stroke="#0a4d8c" strokeWidth="2" />
        </svg>
      </SideTile>
    </div>
  )
}

function StatusBar() {
  return (
    <div className="h-[36px] bg-white flex items-start text-[#222]">
      <span className="ml-[3px] mt-[7px] text-[17px] leading-[24px]">DreamPlan © NCH Software</span>
      <div className="ml-auto mt-[1px] w-px h-[34px] bg-[#ececec]" />
      <span className="ml-[108px] mt-[3px] text-[14px] leading-[18px]">10%</span>
      <div className="ml-[6px] mt-[10px] w-0 h-0 border-x-[3px] border-x-transparent border-b-[3px] border-b-[#222]" />
      <svg className="ml-[25px] mt-[4px]" width="16" height="16" viewBox="0 0 16 16">
        <circle cx="8" cy="8" r="7.5" fill="#d8d8d8" stroke="#8a8a8a" />
        <path d="M4 8 H12" stroke="#444" strokeWidth="2" />
      </svg>
      <div className="relative ml-[5px] mt-[9px] w-[212px] h-[6px] bg-[#e2e2e2] border border-[#d0d0d0]">
        <svg className="absolute -top-[5px] -left-px" width="10" height="15" viewBox="0 0 10 15">
          <path d="M0.5 0.5 H9.5 V10 L5 14.5 L0.5 10 Z" fill="#d6d6d6" stroke="#8a8a8a" />
        </svg>
        <div className="absolute top-[16px] left-[4px] w-px h-[3px] bg-[#aaa]" />
        <div className="absolute top-[16px] right-[4px] w-px h-[3px] bg-[#aaa]" />
      </div>
      <svg className="ml-[7px] mt-[4px]" width="16" height="16" viewBox="0 0 16 16">
        <circle cx="8" cy="8" r="7.5" fill="#d8d8d8" stroke="#8a8a8a" />
        <path d="M4 8 H12 M8 4 V12" stroke="#444" strokeWidth="2" />
      </svg>
      <div className="w-[20px]" />
    </div>
  )
}

export default function App() {
  return (
    <div className={`w-[1920px] h-[1020px] overflow-hidden flex flex-col bg-white ${FONT}`}>
      <TopBar />
      <div className="h-[810px] flex">
        <div className="w-[360px] flex-shrink-0 flex flex-col">
          <div className="flex h-[516px] bg-[#f0f0f0]">
            <WallProperties />
            <PanelScrollbar />
          </div>
          <FloorPanel />
        </div>
        <PlanCanvas />
        <SideTools />
      </div>
      <StatusBar />
    </div>
  )
}
